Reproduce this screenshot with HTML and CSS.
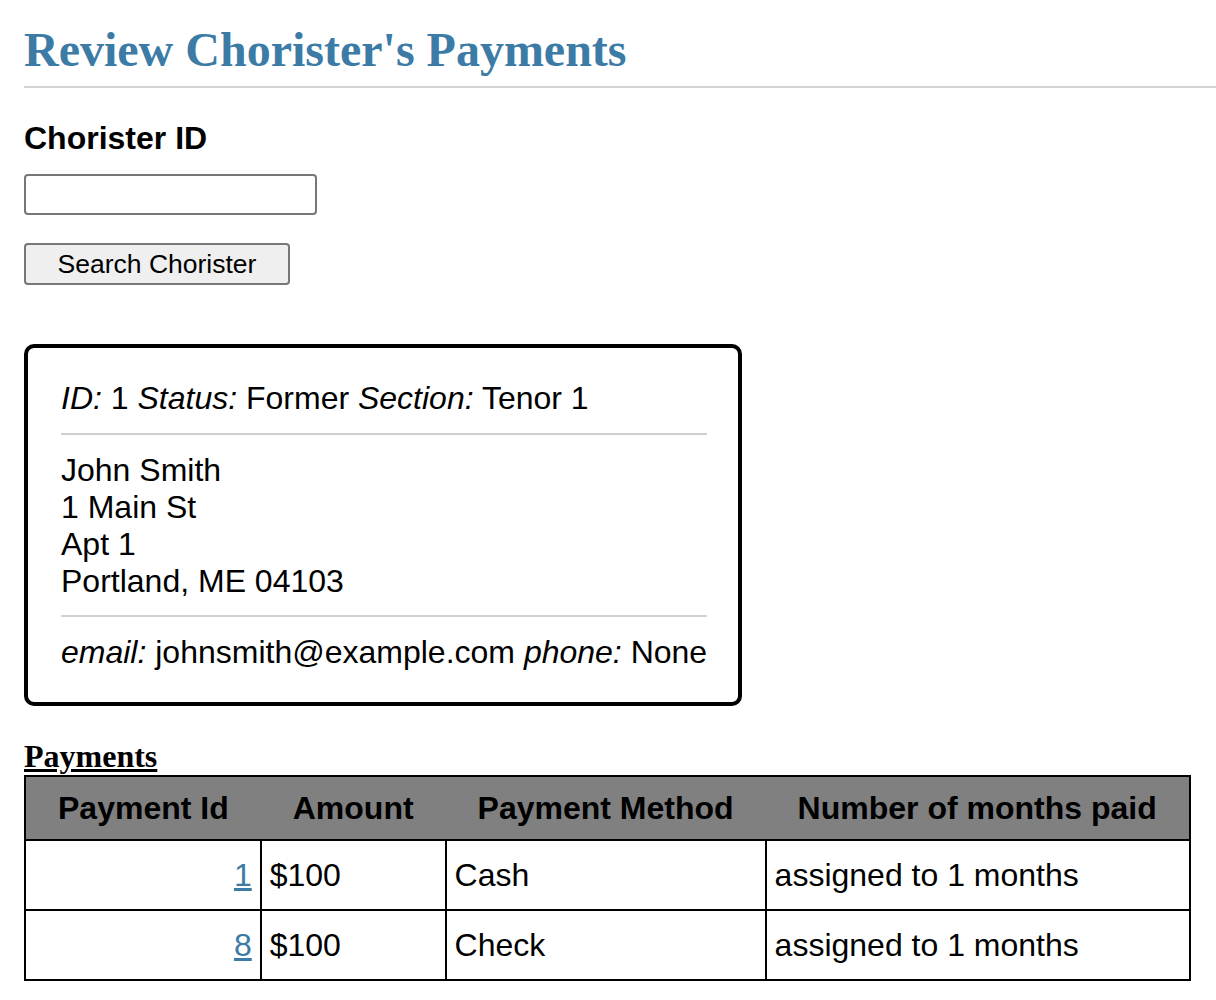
FILE: index.html
```html
<!DOCTYPE html>
<html lang="en">
<head>
<meta charset="utf-8">
<title>Review Chorister's Payments</title>
<link rel="stylesheet" href="styles.css">
</head>
<body>
<div class="page">
  <h1 class="title">Review Chorister's Payments</h1>
  <form class="search">
    <label class="label" for="cid">Chorister ID</label>
    <input class="field" id="cid" type="text">
    <button class="btn" type="button">Search Chorister</button>
  </form>
  <div class="card">
    <div class="sec first"><i>ID:</i> 1 <i>Status:</i> Former <i>Section:</i> Tenor 1</div>
    <div class="sec mid">John Smith<br>1 Main St<br>Apt 1<br>Portland, ME 04103</div>
    <div class="sec last"><i>email:</i> johnsmith@example.com <i>phone:</i> None</div>
  </div>
  <table class="pay">
    <caption class="cap"><u>Payments</u></caption>
    <thead>
      <tr><th>Payment Id</th><th>Amount</th><th>Payment Method</th><th>Number of months paid</th></tr>
    </thead>
    <tbody>
      <tr><td class="num"><a href="#">1</a></td><td>$100</td><td>Cash</td><td>assigned to 1 months</td></tr>
      <tr><td class="num"><a href="#">8</a></td><td>$100</td><td>Check</td><td>assigned to 1 months</td></tr>
    </tbody>
  </table>
</div>
</body>
</html>
```

FILE: styles.css
```css
html, body {
  margin: 0;
  padding: 0;
  background: #fff;
}
body {
  font-family: "Liberation Sans", Arial, sans-serif;
  font-size: 32px;
  line-height: 37px;
  color: #000;
}
.page {
  padding: 23px 0 0 24px;
}
.title {
  margin: 0;
  padding: 0 0 10px;
  font-family: "Liberation Serif", "Times New Roman", serif;
  font-size: 48px;
  line-height: 53px;
  font-weight: bold;
  color: #3b7ba6;
  border-bottom: 2px solid #d4d4d4;
}
.search {
  display: flex;
  flex-direction: column;
  align-items: flex-start;
  margin: 0;
}
.label {
  display: block;
  margin-top: 32px;
  font-weight: bold;
  font-size: 32px;
  line-height: 37px;
}
.field {
  margin: 17px 0 0;
  width: 293px;
  height: 41px;
  box-sizing: border-box;
  border: 2px solid #777;
  border-radius: 4px;
  background: #fff;
  font-family: "Liberation Sans", Arial, sans-serif;
  font-size: 26px;
  padding: 0 6px;
}
.btn {
  margin: 28px 0 0;
  width: 266px;
  height: 42px;
  box-sizing: border-box;
  border: 2px solid #777;
  border-radius: 4px;
  background: #efefef;
  color: #000;
  font-family: "Liberation Sans", Arial, sans-serif;
  font-size: 26.5px;
  line-height: 30px;
  padding: 0;
}
.card {
  width: fit-content;
  margin: 59px 0 32px;
  border: 4px solid #000;
  border-radius: 10px;
  padding: 32px 31px 31px 33px;
}
.sec.first {
  padding-bottom: 16px;
}
.sec.mid {
  border-top: 2px solid #d0d0d0;
  padding: 17px 0 15px;
}
.sec.last {
  border-top: 2px solid #d0d0d0;
  padding-top: 17px;
}
.pay {
  border-collapse: collapse;
  border: 2px solid #000;
}
.cap {
  caption-side: top;
  text-align: left;
  font-family: "Liberation Serif", "Times New Roman", serif;
  font-weight: bold;
  font-size: 32px;
  line-height: 37px;
}
.pay th {
  background: #808080;
  font-weight: bold;
  padding: 13px 32px 12px;
  border-top: 2px solid #000;
  border-bottom: 2px solid #000;
  text-align: center;
}
.pay td {
  border: 2px solid #000;
  padding: 16px 8px 15px;
  text-align: left;
}
.pay td.num {
  text-align: right;
}
.pay a {
  color: #3b7ba6;
  text-decoration: underline;
}
```
